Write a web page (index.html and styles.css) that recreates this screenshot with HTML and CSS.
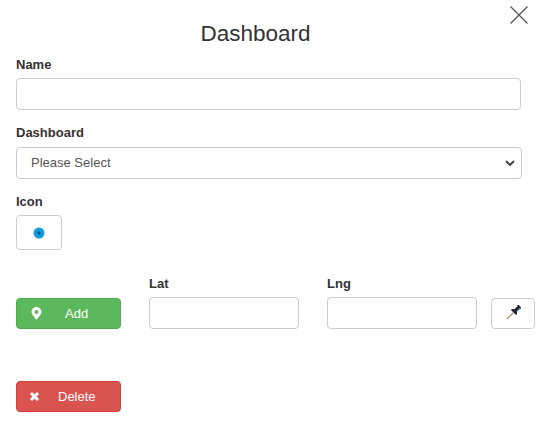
FILE: index.html
```html
<!DOCTYPE html>
<html lang="en">
<head>
  <meta charset="UTF-8">
  <title>Dashboard</title>
  <link rel="stylesheet" href="styles.css">
</head>
<body>
  <div class="modal">
    <button type="button" class="close-btn" aria-label="Close">
      <svg width="18" height="18" viewBox="0 0 18 18"><path d="M0.5 0.5 L17.5 17.5 M17.5 0.5 L0.5 17.5" stroke="#555" stroke-width="1.3" fill="none"/></svg>
    </button>
    <h1>Dashboard</h1>

    <div class="form-group">
      <label for="name">Name</label>
      <input type="text" id="name" class="name-input">
    </div>

    <div class="form-group">
      <label for="dashboard" class="label-low">Dashboard</label>
      <div class="select-wrap">
        <select id="dashboard" class="simple-select">
          <option>Please Select</option>
        </select>
        <svg class="chevron" width="10" height="6" viewBox="0 0 10 6"><path d="M1 1 L5 5 L9 1" stroke="#444" stroke-width="2" fill="none"/></svg>
      </div>
    </div>

    <!-- ICON PICKER -->
    <div class="form-group icon-group">
      <label>Icon</label>
      <button type="button" class="icon-btn">
        <svg width="12" height="12" viewBox="0 0 12 12"><circle cx="6" cy="6" r="5.5" fill="#0c9ee0"/><circle cx="6" cy="6" r="1.7" fill="#164f7a"/></svg>
      </button>
    </div>

    <!-- LOCATION ROW -->
    <div class="location-row">
      <button type="button" class="btn btn-green">
        <svg class="btn-icon" width="11" height="13" viewBox="0 0 10 13"><path fill-rule="evenodd" d="M5 0 C2.2 0 0 2.2 0 5 C0 7.5 3.5 10.5 5 13 C6.5 10.5 10 7.5 10 5 C10 2.2 7.8 0 5 0 Z M5 3 A2 2 0 1 1 5 7 A2 2 0 1 1 5 3 Z" fill="#fff"/></svg>
        Add
      </button>
      <div class="coord">
        <label for="lat">Lat</label>
        <input type="text" id="lat">
      </div>
      <div class="coord">
        <label for="lng">Lng</label>
        <input type="text" id="lng">
      </div>
      <button type="button" class="pin-btn">
        <svg class="pin-icon" width="15" height="15" viewBox="-7.5 -7.5 15 15">
          <g transform="translate(0 0) rotate(45)">
            <path d="M0 0 L0 9.5" stroke="#a07a40" stroke-width="1" fill="none"/>
            <path d="M-2.6 -9 H2.6 V-7.6 H1.6 V-3.2 L3.6 -1.4 V0 H-3.6 V-1.4 L-1.6 -3.2 V-7.6 H-2.6 Z" fill="#26262e"/>
            <path d="M1.8 -9 V-3" stroke="#1f8fd0" stroke-width="0.9" fill="none"/>
          </g>
        </svg>
      </button>
    </div>

    <button type="button" class="btn btn-red">
      <svg class="btn-icon" width="11" height="11" viewBox="0 0 11 11"><path d="M2 2 L9 9 M9 2 L2 9" stroke="#fff" stroke-width="3" fill="none"/></svg>
      Delete
    </button>
  </div>
</body>
</html>
```

FILE: styles.css
```css
* {
  box-sizing: border-box;
  font-family: 'Liberation Sans', Arial, sans-serif;
}

body {
  margin: 0;
  background-color: white;
  color: #333;
}

.modal {
  position: relative;
  padding: 21px 8px 0 16px;
}

h1 {
  margin: 0 0 9px 0;
  padding-right: 40px;
  font-size: 22.5px;
  line-height: 26px;
  font-weight: 400;
  text-align: center;
}

.close-btn {
  position: absolute;
  top: 6px;
  right: 15px;
  padding: 0;
  border: none;
  background: none;
  line-height: 0;
}

label {
  display: block;
  margin-bottom: 4px;
  font-size: 13px;
  line-height: 18px;
  font-weight: bold;
}

.label-low {
  margin-bottom: 5px;
}

.form-group {
  margin-bottom: 14px;
}

.icon-group {
  margin-bottom: 25px;
}

input {
  display: block;
  height: 32px;
  border: 1px solid #ccc;
  border-radius: 4px;
  background-color: white;
}

.name-input {
  width: 505px;
}

.select-wrap {
  position: relative;
  width: 506px;
}

.simple-select {
  display: block;
  width: 100%;
  height: 32px;
  padding: 0 0 2px 14px;
  border: 1px solid #ccc;
  border-radius: 4px;
  background-color: white;
  color: #555;
  font-size: 13px;
  appearance: none;
}

.chevron {
  position: absolute;
  top: 13px;
  right: 7px;
}

.icon-btn {
  display: flex;
  align-items: center;
  justify-content: center;
  width: 46px;
  height: 35px;
  padding: 0;
  border: 1px solid #ccc;
  border-radius: 4px;
  background-color: white;
}

.location-row {
  display: flex;
  align-items: flex-end;
}

.coord {
  margin-left: 28px;
}

.coord input {
  width: 150px;
}

.btn {
  display: flex;
  align-items: center;
  width: 105px;
  height: 31px;
  padding: 0;
  border-radius: 4px;
  color: white;
  font-size: 13px;
}

.btn-green {
  padding-left: 14px;
  gap: 23px;
  background-color: #5cb85c;
  border: 1px solid #4cae4c;
}

.btn-red {
  margin-top: 52px;
  padding-left: 12px;
  gap: 18px;
  background-color: #d9534f;
  border: 1px solid #d43f3a;
}

.pin-btn {
  display: flex;
  align-items: center;
  justify-content: center;
  width: 44px;
  height: 31px;
  margin-left: 14px;
  padding: 0 0 2px 1px;
  border: 1px solid #ccc;
  border-radius: 4px;
  background-color: white;
}
```
